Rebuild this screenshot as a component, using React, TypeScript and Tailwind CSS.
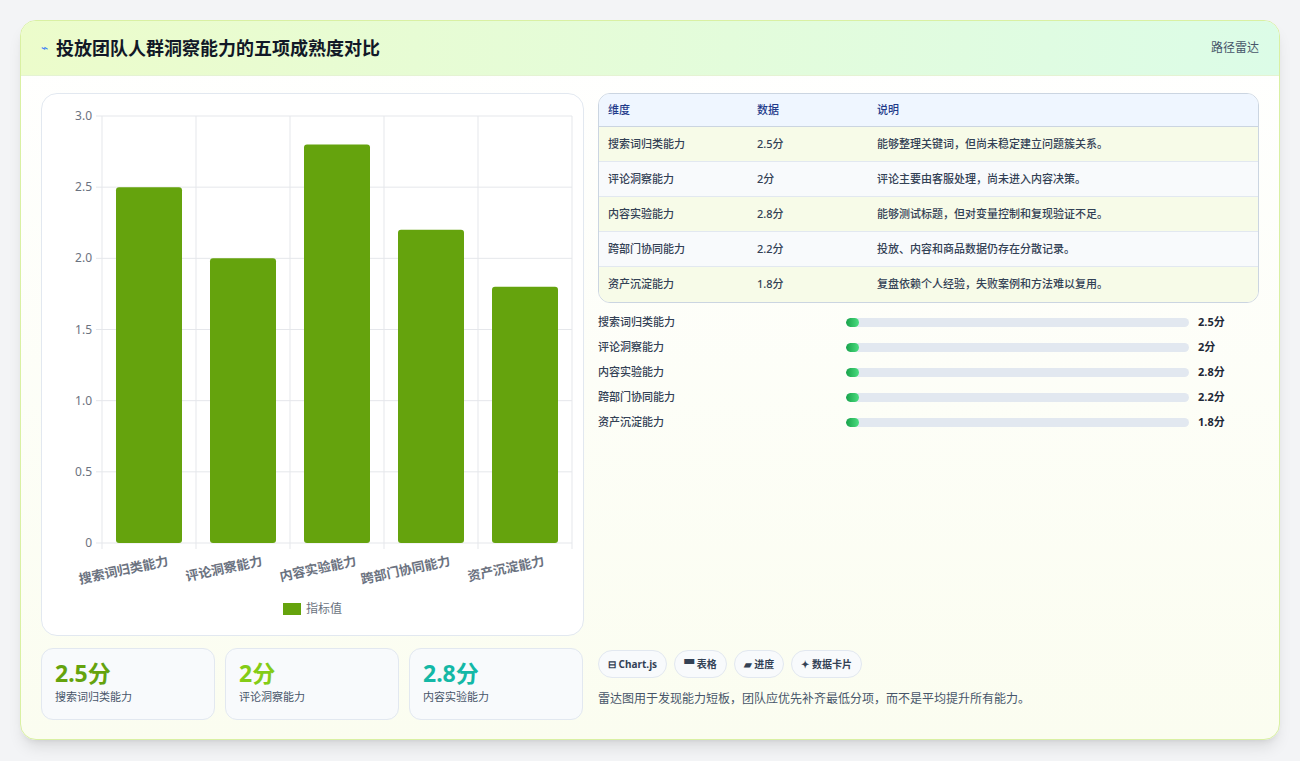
import React from "react";

const rows = [
  { name: "搜索词归类能力", v: 2.5, note: "能够整理关键词，但尚未稳定建立问题簇关系。" },
  { name: "评论洞察能力", v: 2, note: "评论主要由客服处理，尚未进入内容决策。" },
  { name: "内容实验能力", v: 2.8, note: "能够测试标题，但对变量控制和复现验证不足。" },
  { name: "跨部门协同能力", v: 2.2, note: "投放、内容和商品数据仍存在分散记录。" },
  { name: "资产沉淀能力", v: 1.8, note: "复盘依赖个人经验，失败案例和方法难以复用。" },
];

function BarChart() {
  // svg coords relative to chart card (x0=40, y0=93)
  const left = 60, right = 530, top = 22, bottom = 449;
  const h = bottom - top;
  const step = (right - left) / 5;
  const ticks = [0, 0.5, 1, 1.5, 2, 2.5, 3];
  return (
    <svg width="543" height="543" className="block">
      {ticks.map((t) => {
        const y = bottom - (t / 3) * h;
        return (
          <g key={t}>
            <line x1={left - 6} x2={right} y1={y} y2={y} stroke="#e5e7eb" />
            <text x={left - 10} y={y + 4} textAnchor="end" fontSize="12" fill="#6b7280">
              {t === 0 ? "0" : t.toFixed(1)}
            </text>
          </g>
        );
      })}
      {[0, 1, 2, 3, 4, 5].map((i) => (
        <line key={i} x1={left + i * step} x2={left + i * step} y1={top} y2={bottom + 6} stroke="#e5e7eb" />
      ))}
      {rows.map((r, i) => {
        const bh = (r.v / 3) * h;
        const cx = left + i * step + step / 2;
        return (
          <g key={r.name}>
            <rect x={cx - 33} y={bottom - bh} width={66} height={bh} rx={3} fill="#65a30d" />
            <text
              x={cx + 20}
              y={bottom + 22}
              textAnchor="end"
              fontSize="13"
              fontWeight="600"
              fill="#6b7280"
              transform={`rotate(-12 ${cx + 20} ${bottom + 22})`}
            >
              {r.name}
            </text>
          </g>
        );
      })}
      <rect x={241} y={509} width={18} height={12} fill="#65a30d" />
      <text x={264} y={519} fontSize="12" fill="#6b7280">指标值</text>
    </svg>
  );
}

export default function App() {
  return (
    <div
      className="min-h-screen bg-[#f3f4f6] p-5"
      style={{ fontFamily: '"Noto Sans", "Noto Sans CJK SC", sans-serif' }}
    >
      <div className="h-[720px] rounded-2xl border border-[#d9f0a3] bg-gradient-to-b from-white to-[#fbfdf0] shadow-lg overflow-hidden">
        <div className="h-[55px] flex items-center justify-between px-5 bg-gradient-to-r from-[#ecfccb] to-[#dcfce7] border-b border-[#e5f3d3]">
          <div className="flex items-center gap-2">
            <span className="text-[#3b82f6] text-xs">⌁</span>
            <h1 className="text-[18px] font-bold text-[#111827]">投放团队人群洞察能力的五项成熟度对比</h1>
          </div>
          <span className="text-xs text-[#475569]">路径雷达</span>
        </div>
        <div className="flex gap-[14px] px-5 pt-[17px]">
          <div className="w-[543px] flex flex-col gap-3">
            <div className="h-[543px] rounded-2xl border border-[#e2e8f0] bg-white">
              <BarChart />
            </div>
            <div className="flex gap-[10px]">
              {[
                { v: "2.5分", l: "搜索词归类能力", c: "text-[#65a30d]" },
                { v: "2分", l: "评论洞察能力", c: "text-[#84cc16]" },
                { v: "2.8分", l: "内容实验能力", c: "text-[#14b8a6]" },
              ].map((s) => (
                <div key={s.l} className="w-[174px] h-[72px] rounded-xl border border-[#e2e8f0] bg-[#f8fafc] px-[13px] pt-2">
                  <div className={`text-[23px] font-bold leading-8 ${s.c}`}>{s.v}</div>
                  <div className="text-[11px] text-[#475569]">{s.l}</div>
                </div>
              ))}
            </div>
          </div>
          <div className="flex-1 flex flex-col">
            <div className="rounded-xl border border-[#cbd5e1] overflow-hidden text-[11px] text-[#334155] font-medium">
              <div className="flex h-[33px] items-center bg-[#eff6ff] text-[#1e3a8a] border-b border-[#cbd5e1]">
                <div className="w-[158px] pl-[9px]">维度</div>
                <div className="w-[120px]">数据</div>
                <div className="flex-1">说明</div>
              </div>
              {rows.map((r, i) => (
                <div
                  key={r.name}
                  className={`flex h-[35px] items-center ${i % 2 === 0 ? "bg-[#f7fbe8]" : "bg-[#f8fafc]"} ${i < 4 ? "border-b border-[#e2e8f0]" : ""}`}
                >
                  <div className="w-[158px] pl-[9px]">{r.name}</div>
                  <div className="w-[120px]">{r.v}分</div>
                  <div className="flex-1">{r.note}</div>
                </div>
              ))}
            </div>
            <div className="mt-[13px] flex flex-col gap-[13px] text-[11px]">
              {rows.map((r) => (
                <div key={r.name} className="flex items-center h-3">
                  <div className="w-[248px] text-[#334155] font-medium">{r.name}</div>
                  <div className="w-[343px] h-[9px] rounded-full bg-[#e2e8f0] overflow-hidden">
                    <div className="w-[13px] h-full rounded-full bg-gradient-to-r from-[#16a34a] to-[#4ade80]" />
                  </div>
                  <div className="ml-[9px] font-bold text-[#1f2937]">{r.v}分</div>
                </div>
              ))}
            </div>
            <div className="mt-auto flex gap-[7px] text-[10px] font-bold text-[#334155]">
              {["⊟ Chart.js", "▀ 表格", "▰ 进度", "✦ 数据卡片"].map((t) => (
                <span key={t} className="h-[28px] px-[9px] flex items-center rounded-full border border-[#e2e8f0] bg-[#f8fafc]">{t}</span>
              ))}
            </div>
            <p className="mt-[12px] mb-[12px] text-[12px] text-[#475569]">雷达图用于发现能力短板，团队应优先补齐最低分项，而不是平均提升所有能力。</p>
          </div>
        </div>
      </div>
    </div>
  );
}
